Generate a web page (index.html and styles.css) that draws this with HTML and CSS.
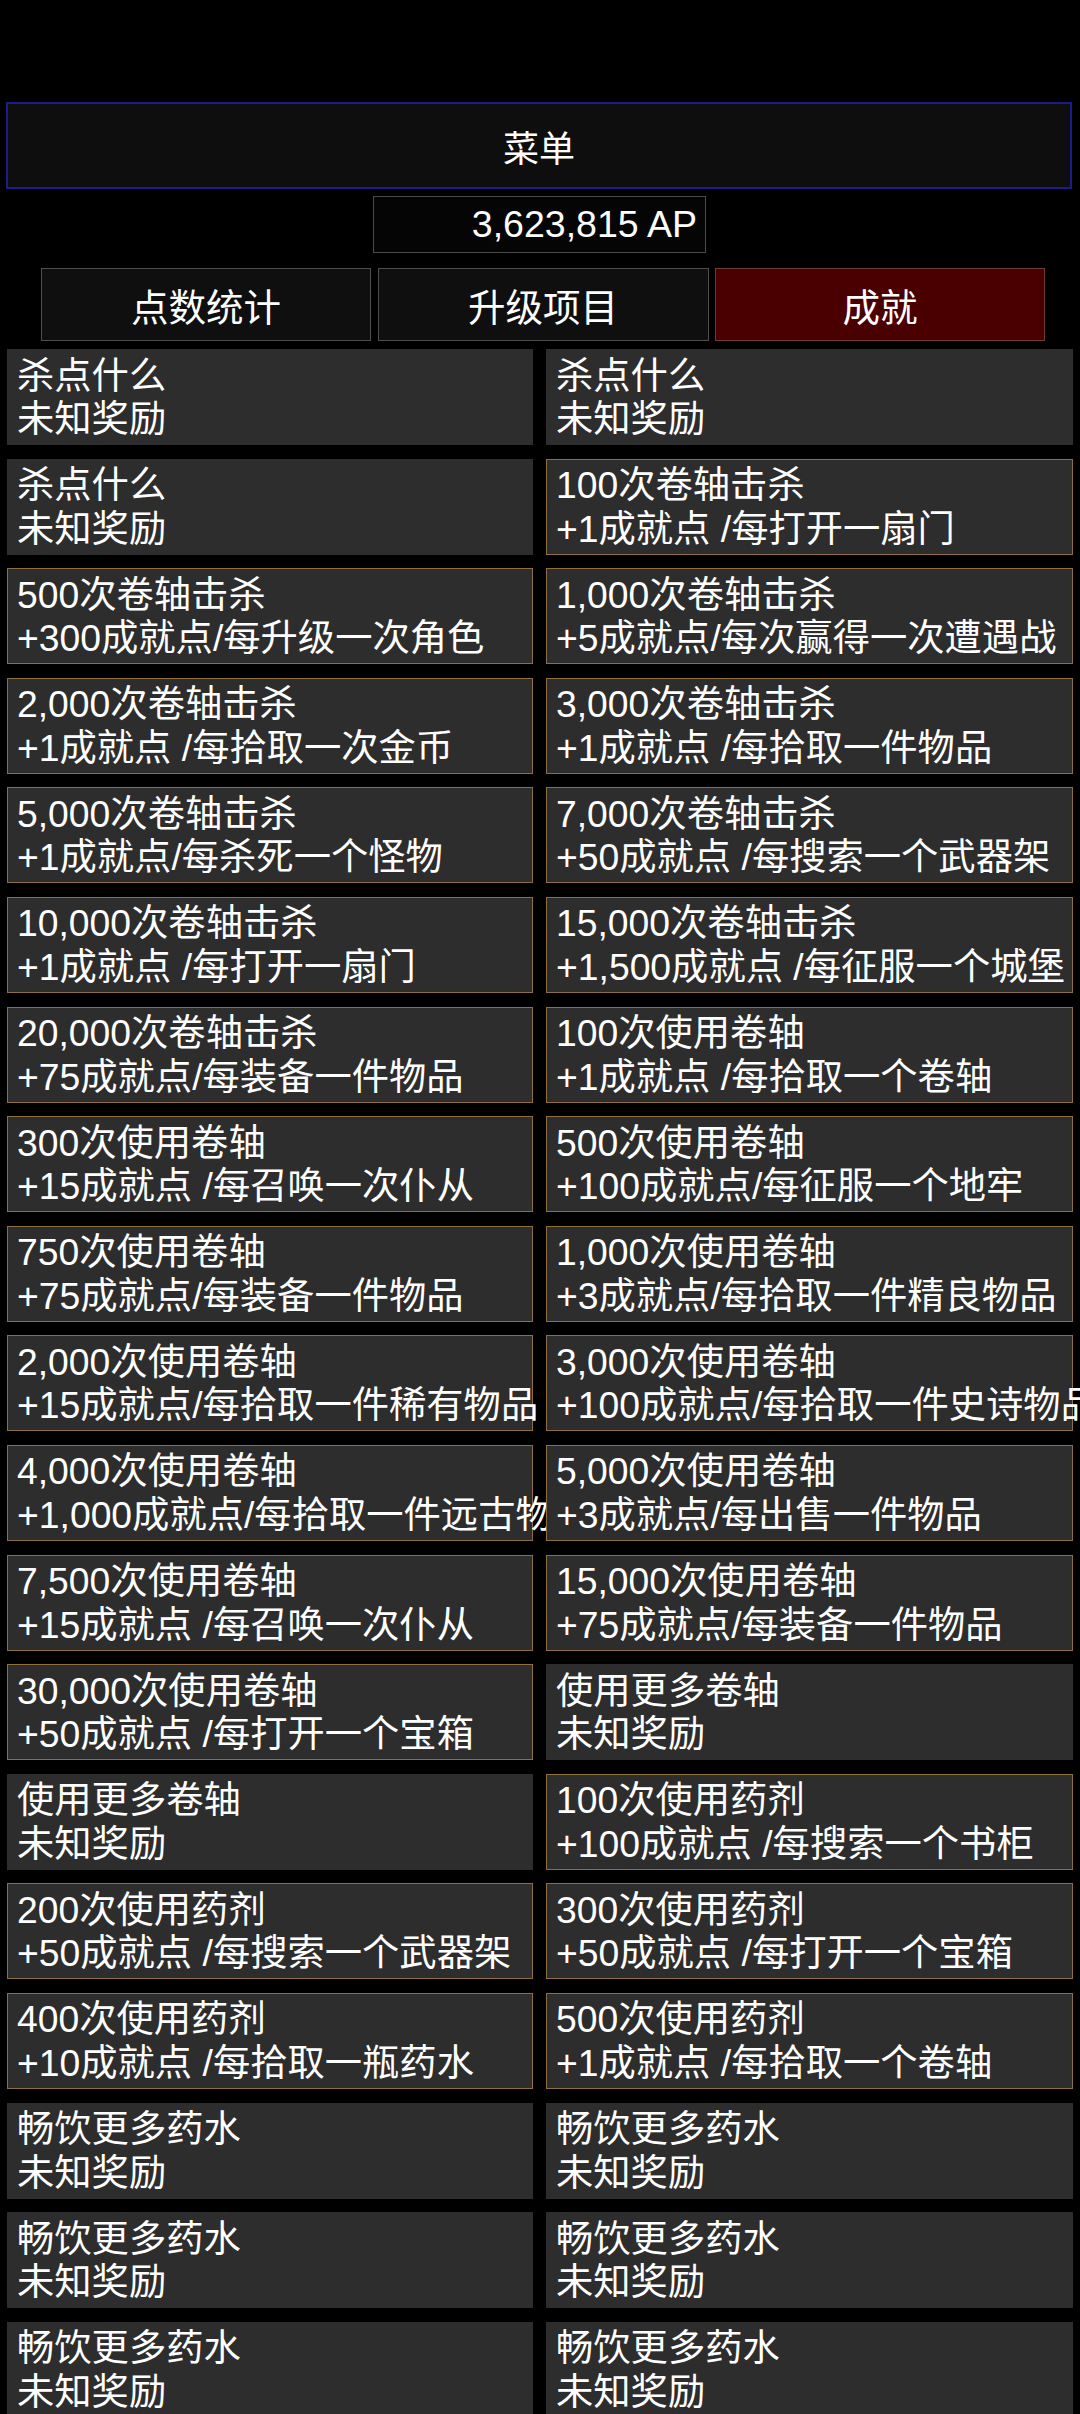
FILE: index.html
```html
<!DOCTYPE html>
<html lang="zh-CN">
<head>
<meta charset="utf-8">
<title>成就</title>
<link rel="stylesheet" href="styles.css">
</head>
<body>
<div class="deco"></div>
<div class="page">
  <div class="menu">菜单</div>
  <div class="ap-row"><div class="ap">3,623,815 AP</div></div>
  <div class="tabs">
    <div class="tab">点数统计</div>
    <div class="tab">升级项目</div>
    <div class="tab active">成就</div>
  </div>
  <div class="grid">
    <div class="card"><div>杀点什么</div><div>未知奖励</div></div>
    <div class="card"><div>杀点什么</div><div>未知奖励</div></div>

    <div class="card"><div>杀点什么</div><div>未知奖励</div></div>
    <div class="card done"><div>100次卷轴击杀</div><div>+1成就点 /每打开一扇门</div></div>

    <div class="card done"><div>500次卷轴击杀</div><div>+300成就点/每升级一次角色</div></div>
    <div class="card done"><div>1,000次卷轴击杀</div><div>+5成就点/每次赢得一次遭遇战</div></div>

    <div class="card done"><div>2,000次卷轴击杀</div><div>+1成就点 /每拾取一次金币</div></div>
    <div class="card done"><div>3,000次卷轴击杀</div><div>+1成就点 /每拾取一件物品</div></div>

    <div class="card done"><div>5,000次卷轴击杀</div><div>+1成就点/每杀死一个怪物</div></div>
    <div class="card done"><div>7,000次卷轴击杀</div><div>+50成就点 /每搜索一个武器架</div></div>

    <div class="card done"><div>10,000次卷轴击杀</div><div>+1成就点 /每打开一扇门</div></div>
    <div class="card done"><div>15,000次卷轴击杀</div><div>+1,500成就点 /每征服一个城堡</div></div>

    <div class="card done"><div>20,000次卷轴击杀</div><div>+75成就点/每装备一件物品</div></div>
    <div class="card done"><div>100次使用卷轴</div><div>+1成就点 /每拾取一个卷轴</div></div>

    <div class="card done"><div>300次使用卷轴</div><div>+15成就点 /每召唤一次仆从</div></div>
    <div class="card done"><div>500次使用卷轴</div><div>+100成就点/每征服一个地牢</div></div>

    <div class="card done"><div>750次使用卷轴</div><div>+75成就点/每装备一件物品</div></div>
    <div class="card done"><div>1,000次使用卷轴</div><div>+3成就点/每拾取一件精良物品</div></div>

    <div class="card done"><div>2,000次使用卷轴</div><div>+15成就点/每拾取一件稀有物品</div></div>
    <div class="card done"><div>3,000次使用卷轴</div><div>+100成就点/每拾取一件史诗物品</div></div>

    <div class="card done"><div>4,000次使用卷轴</div><div>+1,000成就点/每拾取一件远古物品</div></div>
    <div class="card done"><div>5,000次使用卷轴</div><div>+3成就点/每出售一件物品</div></div>

    <div class="card done"><div>7,500次使用卷轴</div><div>+15成就点 /每召唤一次仆从</div></div>
    <div class="card done"><div>15,000次使用卷轴</div><div>+75成就点/每装备一件物品</div></div>

    <div class="card done"><div>30,000次使用卷轴</div><div>+50成就点 /每打开一个宝箱</div></div>
    <div class="card"><div>使用更多卷轴</div><div>未知奖励</div></div>

    <div class="card"><div>使用更多卷轴</div><div>未知奖励</div></div>
    <div class="card done"><div>100次使用药剂</div><div>+100成就点 /每搜索一个书柜</div></div>

    <div class="card done"><div>200次使用药剂</div><div>+50成就点 /每搜索一个武器架</div></div>
    <div class="card done"><div>300次使用药剂</div><div>+50成就点 /每打开一个宝箱</div></div>

    <div class="card done"><div>400次使用药剂</div><div>+10成就点 /每拾取一瓶药水</div></div>
    <div class="card done"><div>500次使用药剂</div><div>+1成就点 /每拾取一个卷轴</div></div>

    <div class="card"><div>畅饮更多药水</div><div>未知奖励</div></div>
    <div class="card"><div>畅饮更多药水</div><div>未知奖励</div></div>

    <div class="card"><div>畅饮更多药水</div><div>未知奖励</div></div>
    <div class="card"><div>畅饮更多药水</div><div>未知奖励</div></div>

    <div class="card"><div>畅饮更多药水</div><div>未知奖励</div></div>
    <div class="card"><div>畅饮更多药水</div><div>未知奖励</div></div>
  </div>
</div>
</body>
</html>
```
FILE: styles.css
```css
html, body {
  margin: 0;
  padding: 0;
  background: #000;
}
body {
  color: #fff;
  font-family: "Liberation Sans", "Noto Sans CJK SC", sans-serif;
  overflow: hidden;
  height: 2414px;
}
.deco {
  position: absolute;
  left: -40px;
  top: 305px;
  width: 57px;
  height: 250px;
  border: 2px solid #2a2a2a;
  border-radius: 22px;
  z-index: -1;
}
.page {
  padding-top: 102px;
}
.menu {
  margin: 0 8px 0 6px;
  height: 83px;
  border: 2px solid #1c1c8a;
  background: #0e0e0e;
  display: flex;
  align-items: center;
  justify-content: center;
  font-size: 36px;
}
.ap-row {
  display: flex;
  padding-left: 373px;
  margin-top: 7px;
}
.ap {
  width: 323px;
  height: 55px;
  border: 1px solid #4a4a4a;
  background: #050505;
  font-size: 37.5px;
  line-height: 55px;
  text-align: right;
  padding-right: 8px;
}
.tabs {
  display: grid;
  grid-template-columns: 330px 331px 330px;
  column-gap: 6.5px;
  margin: 15px 0 0 41px;
}
.tab {
  height: 71px;
  border: 1px solid #4e4e4e;
  background: #0f0f0f;
  display: flex;
  align-items: center;
  justify-content: center;
  font-size: 37.5px;
}
.tab.active {
  background: #4b0000;
  border-color: #6e3a3a;
}
.grid {
  display: grid;
  grid-template-columns: 526px 527px;
  column-gap: 13px;
  row-gap: 13.6px;
  margin: 8px 0 0 7px;
}
.card {
  height: 96px;
  box-sizing: border-box;
  background: #2d2d2d;
  border: 1.5px solid #2d2d2d;
  padding: 4.5px 0 0 9px;
  font-size: 37.3px;
  line-height: 43.5px;
  white-space: nowrap;
}
.card.done {
  border-color: #8f6f3f;
}
```
